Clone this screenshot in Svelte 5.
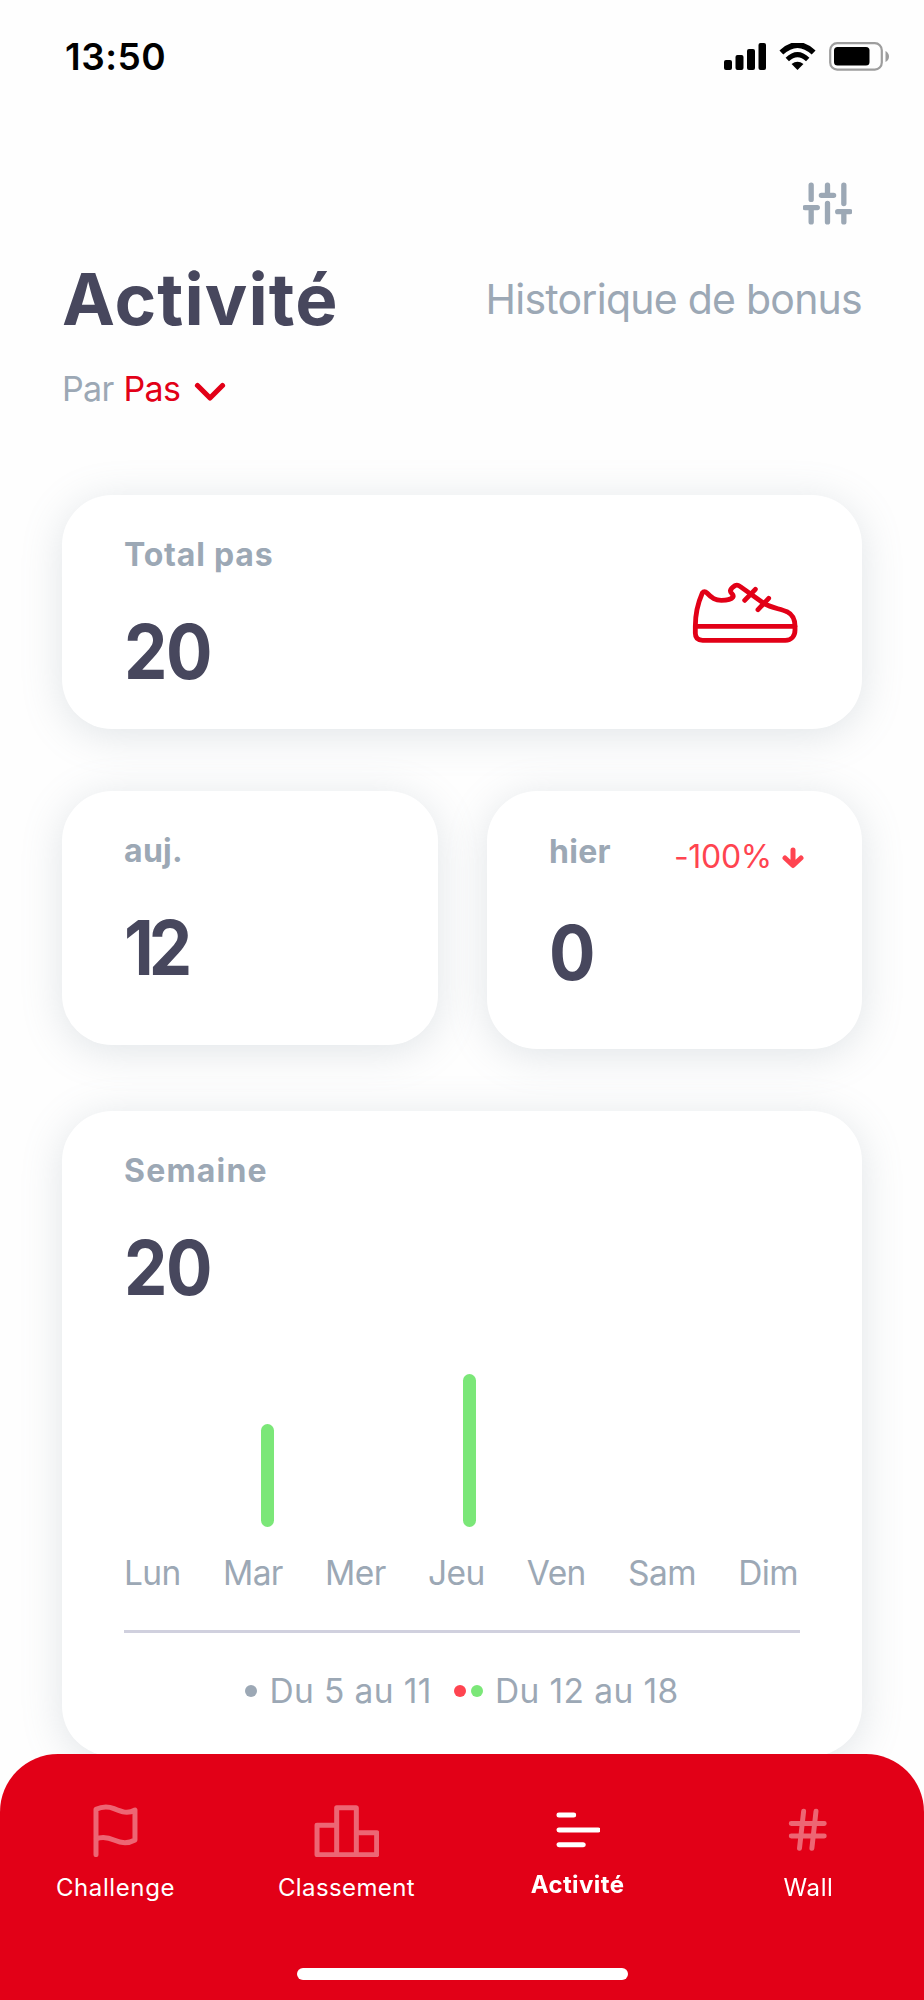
<script lang="ts">
	interface Day {
		label: string;
		height: number;
	}

	let days: Day[] = [
		{ label: 'Lun', height: 0 },
		{ label: 'Mar', height: 103 },
		{ label: 'Mer', height: 0 },
		{ label: 'Jeu', height: 153 },
		{ label: 'Ven', height: 0 },
		{ label: 'Sam', height: 0 },
		{ label: 'Dim', height: 0 }
	];
</script>

<div class="screen">
	<div class="status">
		<span class="time">13:50</span>
		<div class="status-icons">
			<svg class="signal" viewBox="0 0 42 27">
				<rect x="0" y="17" width="8" height="10" rx="2" />
				<rect x="11.5" y="12" width="8" height="15" rx="2" />
				<rect x="23" y="6" width="8" height="21" rx="2" />
				<rect x="34.5" y="0" width="7.5" height="27" rx="2" />
			</svg>
			<svg class="wifi" viewBox="0 0 110 82">
				<path d="M6 29Q55 -17 104 29" fill="none" stroke="#000" stroke-width="17" />
				<path d="M24 50Q55 21 86 50" fill="none" stroke="#000" stroke-width="15" />
				<path d="M37 64Q55 50 73 64L55 82Z" />
			</svg>
			<svg class="battery" viewBox="0 0 61 29">
				<rect x="1.2" y="1.2" width="51.6" height="26.4" rx="7" fill="none" stroke="#9d9d9d" stroke-width="2.2" />
				<rect x="5" y="5" width="35.5" height="18.5" rx="3.5" />
				<path d="M56.5 9Q60 11 60 14.5T56.5 20Z" fill="#9d9d9d" />
			</svg>
		</div>
	</div>

	<main>
		<div class="toolbar">
			<svg class="sliders" viewBox="0 0 24 24">
				<path d="M4 21V14M4 10V3M12 21V12M12 8V3M20 21V16M20 12V3M1 14H7M9 8H15M17 16H23" />
			</svg>
		</div>

		<header>
			<h1>Activité</h1>
			<a class="history" href="#bonus">Historique de bonus</a>
		</header>

		<div class="filter">
			<span>Par</span>
			<span class="selected">Pas</span>
			<svg class="chevron" viewBox="0 0 32 20">
				<path d="M3.5 3.5L16 16L28.5 3.5" />
			</svg>
		</div>

		<section class="card total">
			<div>
				<div class="label total-label">Total pas</div>
				<div class="value">20</div>
			</div>
			<svg class="shoe" viewBox="155 125 318 185">
				<path d="M165 258C165 218 174 185 186 158Q192 150 200 158C215 174 225 180 243 180C259 180 272 178 278 170C282 162 270 160 270 151C272 145 279 139 284 136Q291 132 299 138L372 190C393 203 420 205 440 214C456 222 464 238 464 258V269C464 287 453 300 435 300H187Q165 300 165 279Z" />
				<path d="M165 258H464M313 180L345 147M353 208L385 174" />
			</svg>
		</section>

		<div class="pair">
			<section class="card today">
				<div class="label">auj.</div>
				<div class="value twelve">12</div>
			</section>
			<section class="card yesterday">
				<div class="card-header">
					<span class="label">hier</span>
					<span class="delta">
						-100%
						<svg class="arrow" viewBox="0 0 22 22">
							<path d="M11 3V18M3 11L11 18.5L19 11" />
						</svg>
					</span>
				</div>
				<div class="value">0</div>
			</section>
		</div>

		<section class="card week">
			<div class="label week-label">Semaine</div>
			<div class="value">20</div>
			<div class="chart">
				{#each days as day}
					<div class="slot">
						{#if day.height > 0}
							<div class="bar" style="height: {day.height}px"></div>
						{/if}
					</div>
				{/each}
			</div>
			<div class="days">
				{#each days as day}
					<span>{day.label}</span>
				{/each}
			</div>
			<div class="legend">
				<i class="dot"></i>
				<span class="previous">Du 5 au 11</span>
				<i class="dot down"></i>
				<i class="dot up"></i>
				<span class="current">Du 12 au 18</span>
			</div>
		</section>
	</main>

	<nav>
		<div class="tabs">
			<a class="tab" href="#challenge">
				<span class="icon">
					<svg class="flag" viewBox="280 190 136 160">
						<path d="M289 342V206C304 199 326 197 343 204C365 213 383 221 406 208V298C388 308 365 308 345 299C327 291 308 287 289 295" />
					</svg>
				</span>
				<span>Challenge</span>
			</a>
			<a class="tab" href="#classement">
				<span class="icon">
					<svg class="podium" viewBox="943 190 197 160">
						<path d="M1011 342H952V254H1011M1011 342V201H1070V342ZM1070 276H1131V342H1070" />
					</svg>
				</span>
				<span class="ranking">Classement</span>
			</a>
			<a class="tab active" href="#activite">
				<span class="icon">
					<svg class="lines" viewBox="281 190 136 160">
						<path d="M293 223H337M293 268H411M293 312H366" />
					</svg>
				</span>
				<span>Activité</span>
			</a>
			<a class="tab" href="#wall">
				<span class="icon">
					<svg class="hash" viewBox="0 0 24 24">
						<path d="M4 9H20M4 15H20M10 3L8 21M16 3L14 21" />
					</svg>
				</span>
				<span class="wall">Wall</span>
			</a>
		</div>
		<div class="home-indicator"></div>
	</nav>
</div>

<style>
	:global(body) {
		background: #fefefe;
	}

	.screen {
		width: 924px;
		height: 2000px;
		overflow: hidden;
		box-sizing: border-box;
		font-family: Inter, 'Liberation Sans', sans-serif;
		color: #9ca8b5;
	}

	svg {
		display: block;
		flex-shrink: 0;
	}

	a {
		color: inherit;
		text-decoration: none;
	}

	.status {
		height: 112px;
		display: flex;
		align-items: center;
		justify-content: space-between;
		padding: 0 34px 0 65px;
		color: #000;
	}

	.time {
		padding-top: 1px;
		font-size: 37px;
		font-weight: 600;
		letter-spacing: 0.5px;
	}

	.status-icons {
		display: flex;
		align-items: center;
		gap: 13px;
	}

	.signal {
		width: 42px;
		height: 27px;
	}

	.wifi {
		width: 37px;
		height: 27px;
	}

	.battery {
		width: 61px;
		height: 29px;
	}

	main {
		padding: 67px 62px 0;
	}

	.toolbar {
		display: flex;
		justify-content: flex-end;
		padding-right: 10px;
	}

	.sliders {
		width: 49px;
		height: 49px;
		fill: none;
		stroke: #9ca8b5;
		stroke-width: 2.6;
		stroke-linecap: round;
	}

	header {
		height: 90px;
		margin-top: 26px;
		display: flex;
		align-items: center;
		justify-content: space-between;
	}

	h1 {
		margin: 0;
		font-size: 71px;
		font-weight: 650;
		line-height: 90px;
		letter-spacing: 1.1px;
		color: #47475d;
	}

	.history {
		font-size: 41px;
		letter-spacing: -0.75px;
	}

	.filter {
		height: 48px;
		margin-top: 20px;
		display: flex;
		align-items: center;
		font-size: 34px;
		letter-spacing: -0.7px;
	}

	.selected {
		margin-left: 10px;
		color: #e20017;
	}

	.chevron {
		width: 32px;
		height: 20px;
		margin: 7px 0 0 14px;
		fill: none;
		stroke: #e20017;
		stroke-width: 5.2;
		stroke-linecap: round;
		stroke-linejoin: round;
	}

	.card {
		box-sizing: border-box;
		padding: 36px 62px 0;
		background: #fff;
		border-radius: 50px;
		box-shadow: 0 6px 40px rgba(130, 145, 160, 0.24);
	}

	.label {
		font-size: 32px;
		font-weight: 650;
		line-height: 48px;
		letter-spacing: 0.3px;
	}

	.total-label {
		letter-spacing: 0.8px;
	}

	.week-label {
		letter-spacing: 1.2px;
	}

	/* digits are drawn slightly condensed */
	.value {
		margin-top: 28px;
		font-size: 75px;
		font-weight: 650;
		line-height: 90px;
		letter-spacing: -1.5px;
		color: #47475d;
		transform: scaleX(0.92);
		transform-origin: left;
	}

	.twelve {
		letter-spacing: -5.5px;
	}

	.total {
		height: 234px;
		margin-top: 83px;
		display: flex;
		justify-content: space-between;
	}

	.shoe {
		width: 106px;
		height: 61.7px;
		margin: 50.5px 2.5px 0 0;
		fill: none;
		stroke: #e20017;
		stroke-width: 14.5;
		stroke-linecap: round;
		stroke-linejoin: round;
	}

	.pair {
		margin-top: 62px;
		display: grid;
		grid-template-columns: 376px 375px;
		justify-content: space-between;
		align-items: start;
	}

	.today {
		height: 253.5px;
	}

	.yesterday {
		height: 258px;
		padding-top: 35px;
		padding-right: 58px;

		& .value {
			margin-top: 30px;
		}
	}

	.card-header {
		height: 52px;
		display: flex;
		align-items: center;
		justify-content: space-between;
	}

	.delta {
		display: flex;
		align-items: center;
		gap: 10px;
		padding-top: 8px;
		font-size: 32px;
		letter-spacing: -0.3px;
		color: #ff4450;
	}

	.arrow {
		width: 22px;
		height: 22px;
		margin-top: 4px;
		fill: none;
		stroke: #ff4450;
		stroke-width: 5;
		stroke-linecap: round;
		stroke-linejoin: round;
	}

	.week {
		height: 645px;
		margin-top: 62px;
	}

	.chart {
		height: 153px;
		margin: 61px -23px 0 -8px;
		display: grid;
		grid-template-columns: repeat(7, 101px);
	}

	.slot {
		display: flex;
		align-items: flex-end;
		justify-content: center;
	}

	.bar {
		width: 13px;
		border-radius: 7px;
		background: #7be778;
	}

	.days {
		margin-top: 23px;
		padding: 0 2px 34px 0;
		display: flex;
		justify-content: space-between;
		border-bottom: 3px solid #d0d0de;
		font-size: 33.5px;
		line-height: 46px;
		letter-spacing: -0.6px;
	}

	.legend {
		margin-top: 35px;
		display: flex;
		align-items: center;
		justify-content: center;
		font-size: 33.5px;
		line-height: 46px;
	}

	.dot {
		width: 12px;
		height: 12px;
		border-radius: 50%;
		background: #9ca8b5;

		&.down {
			margin-left: 22px;
			background: #ff4450;
		}

		&.up {
			margin-left: 5px;
			background: #7be778;
		}
	}

	.previous,
	.current {
		margin-left: 12px;
		letter-spacing: 0.4px;
	}

	nav {
		position: fixed;
		left: 0;
		top: 1754px;
		width: 924px;
		height: 246px;
		border-radius: 58px 58px 0 0;
		background: #e20017;
		color: #fff;
	}

	.tabs {
		height: 214px;
		display: grid;
		grid-template-columns: repeat(4, 231px);
	}

	.tab {
		display: flex;
		flex-direction: column;
		align-items: center;
		padding-top: 50px;
		font-size: 24px;
		line-height: 30px;
		letter-spacing: 0.6px;
	}

	.ranking {
		letter-spacing: 0.4px;
	}

	.icon {
		height: 54px;
		margin-bottom: 15px;
		opacity: 0.4;

		& svg {
			height: 53.3px;
			fill: none;
			stroke: #fff;
			stroke-width: 15;
			stroke-linecap: round;
			stroke-linejoin: round;
		}

		& .hash {
			width: 49.5px;
			height: 49.5px;
			margin: 1px 2px 0 0;
			stroke-width: 2.4;
		}
	}

	.flag,
	.lines {
		width: 45.3px;
	}

	.podium {
		width: 65.7px;
	}

	.active {
		font-weight: 650;
		letter-spacing: 0.4px;

		& .icon {
			margin-bottom: 12px;
			opacity: 1;
		}
	}

	.home-indicator {
		width: 331px;
		height: 12px;
		margin: 0 auto;
		border-radius: 6px;
		background: #fff;
	}
</style>
